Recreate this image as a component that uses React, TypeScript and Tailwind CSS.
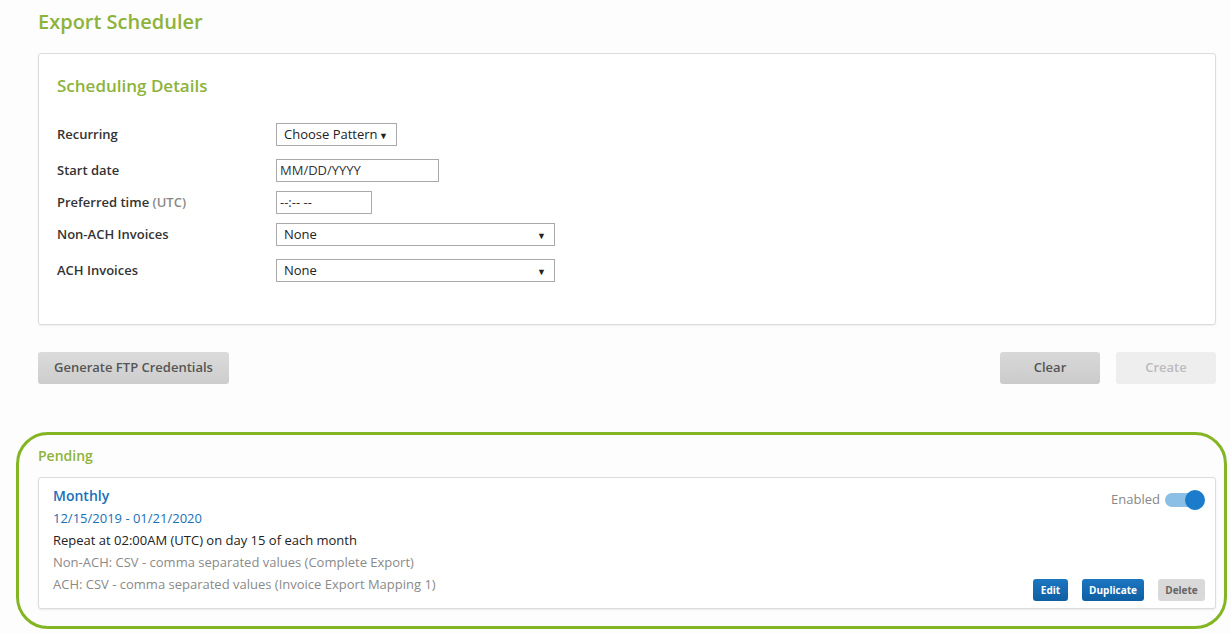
import React from 'react';

const font = { fontFamily: '"Open Sans", "Liberation Sans", sans-serif' };

function Caret() {
  return <span className="text-[9px] leading-none text-[#222]">▼</span>;
}

function FakeSelect({ value, width }: { value: string; width: string }) {
  return (
    <div className={`${width} h-[23px] border border-[#a9a9a9] bg-white flex items-center justify-between pl-[7px] pr-[8px] pt-[1px] text-[13px] text-[#222]`}>
      <span>{value}</span>
      <Caret />
    </div>
  );
}

function FakeInput({ value, width }: { value: string; width: string }) {
  return (
    <div className={`${width} h-[23px] border border-[#a9a9a9] bg-white flex items-center pl-[3px] text-[13px] text-[#333]`}>
      {value}
    </div>
  );
}

function Row({ label, extra, children, className = '' }: { label: string; extra?: string; children: React.ReactNode; className?: string }) {
  return (
    <div className={`flex items-center ${className}`}>
      <div className="w-[219px] text-[13px] font-semibold text-[#333]">
        {label}
        {extra && <span className="text-[#888]"> {extra}</span>}
      </div>
      {children}
    </div>
  );
}

export default function App() {
  return (
    <div className="min-h-[634px] bg-[#fdfdfd] pl-[38px] pr-[15px] pt-[9px]" style={font}>
      <h1 className="text-[20px] font-semibold text-[#8db33a] leading-[26px]">Export Scheduler</h1>

      <div className="mt-[18px] border border-[#dcdcdc] rounded-[3px] bg-white shadow-[0_1px_2px_rgba(0,0,0,0.06)] pl-[18px] pt-[20px] pb-[42px]">
        <h2 className="text-[17px] font-semibold text-[#8db33a] leading-[24px]">Scheduling Details</h2>
        <div className="mt-[25px]">
          <Row label="Recurring">
            <FakeSelect value="Choose Pattern" width="w-[121px]" />
          </Row>
          <Row label="Start date" className="mt-[13px]">
            <FakeInput value="MM/DD/YYYY" width="w-[163px]" />
          </Row>
          <Row label="Preferred time" extra="(UTC)" className="mt-[9px]">
            <FakeInput value="--:-- --" width="w-[96px]" />
          </Row>
          <Row label="Non-ACH Invoices" className="mt-[9px]">
            <FakeSelect value="None" width="w-[279px]" />
          </Row>
          <Row label="ACH Invoices" className="mt-[13px]">
            <FakeSelect value="None" width="w-[279px]" />
          </Row>
        </div>
      </div>

      <div className="mt-[27px] flex items-center">
        <button className="h-[32px] w-[191px] rounded-[3px] bg-gradient-to-b from-[#dbdbdb] to-[#cdcdcd] text-[13px] font-semibold text-[#555]">
          Generate FTP Credentials
        </button>
        <div className="flex-1" />
        <button className="h-[32px] w-[100px] rounded-[3px] bg-gradient-to-b from-[#d8d8d8] to-[#cbcbcb] text-[13px] font-semibold text-[#555]">
          Clear
        </button>
        <button className="ml-[16px] h-[32px] w-[100px] rounded-[3px] bg-[#eeeeee] text-[13px] font-semibold text-[#bbb]">
          Create
        </button>
      </div>

      <div className="mt-[48px] -ml-[22px] -mr-[11px] border-[3px] border-[#84b523] rounded-[32px] pl-[19px] pr-[8px] pt-[11px] pb-[17px]">
        <div className="text-[14px] font-semibold text-[#8db33a] leading-[20px]">Pending</div>
        <div className="mt-[11px] border border-[#dcdcdc] rounded-[3px] bg-white shadow-[0_1px_2px_rgba(0,0,0,0.08)] pl-[14px] pr-[10px] pt-[8px] pb-[7px] flex">
          <div className="flex-1">
            <div className="text-[14px] font-semibold text-[#1a70b8] leading-[20px]">Monthly</div>
            <div className="text-[13px] text-[#1a70b8] leading-[22px] mt-[1px]">12/15/2019 - 01/21/2020</div>
            <div className="text-[13px] text-[#222] leading-[22px]">Repeat at 02:00AM (UTC) on day 15 of each month</div>
            <div className="text-[13px] text-[#8a8a8a] leading-[22px]">Non-ACH: CSV - comma separated values (Complete Export)</div>
            <div className="text-[13px] text-[#8a8a8a] leading-[22px] mb-[6px]">ACH: CSV - comma separated values (Invoice Export Mapping 1)</div>
          </div>
          <div className="flex flex-col items-end justify-between">
            <div className="flex items-center gap-[5px] mt-[4px]">
              <span className="text-[13px] text-[#888]">Enabled</span>
              <div className="relative w-[40px] h-[20px]">
                <div className="absolute left-0 right-[2px] top-[3px] h-[14px] rounded-full bg-[#8cbfe6]" />
                <div className="absolute right-0 top-0 w-[20px] h-[20px] rounded-full bg-[#1a7ccb]" />
              </div>
            </div>
            <div className="flex items-center gap-[14px]">
              <button className="h-[22px] w-[35px] rounded-[3px] bg-gradient-to-b from-[#1b76c0] to-[#0f5fa3] text-[10px] font-bold text-white">Edit</button>
              <button className="h-[22px] w-[62px] rounded-[3px] bg-gradient-to-b from-[#1b76c0] to-[#0f5fa3] text-[10px] font-bold text-white">Duplicate</button>
              <button className="h-[22px] w-[47px] rounded-[3px] bg-[#d9d9d9] text-[10px] font-bold text-[#666]">Delete</button>
            </div>
          </div>
        </div>
      </div>
    </div>
  );
}
